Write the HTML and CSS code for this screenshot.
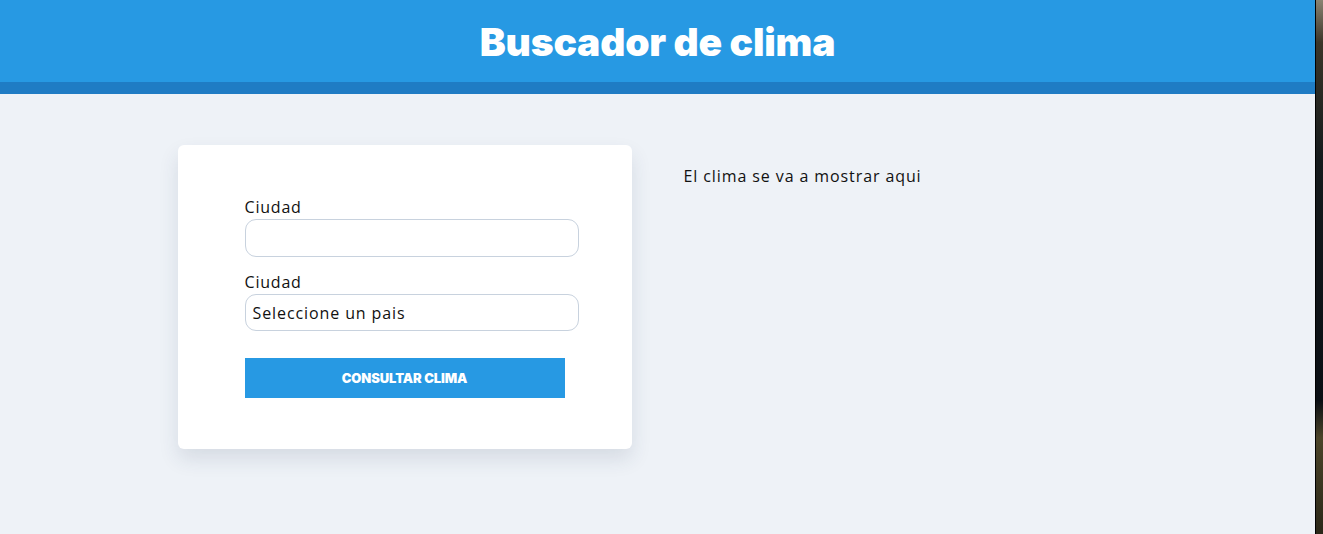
FILE: index.html
```html
<!DOCTYPE html>
<html lang="es">
<head>
<meta charset="utf-8">
<title>Buscador de clima</title>
<link rel="stylesheet" href="styles.css">
</head>
<body>
<div class="page">
  <header class="header">
    <h1 class="title">Buscador de clima</h1>
  </header>
  <main class="container">
    <section class="card">
      <form class="form">
        <div class="field">
          <label class="label">Ciudad</label>
          <div class="input"></div>
        </div>
        <div class="field">
          <label class="label">Ciudad</label>
          <div class="input select">Seleccione un pais</div>
        </div>
        <button type="button" class="button">Consultar clima</button>
      </form>
    </section>
    <section class="result">
      <p class="result-text">El clima se va a mostrar aqui</p>
    </section>
  </main>
</div>
<div class="edge"></div>
</body>
</html>
```

FILE: styles.css
```css
* { box-sizing: border-box; }
html, body { margin: 0; padding: 0; height: 100%; }
body {
  display: flex;
  background: #0c1117;
  font-family: "Open Sans", "DejaVu Sans", sans-serif;
  overflow: hidden;
}
.page {
  width: 1316px;
  height: 534px;
  background: #eef2f7;
  border-right: 1px solid #000;
}
.edge {
  flex: 1;
  background: linear-gradient(180deg, #8a8372 0%, #3a3528 8%, #141a1c 30%, #0a0f14 75%, #4b4429 82%, #2a2718 100%);
}
.header {
  height: 94px;
  background: #2799e3;
  border-bottom: 12px solid #1f7cc4;
  display: flex;
  align-items: center;
  justify-content: center;
}
.title {
  margin: 0;
  color: #fff;
  font-family: Inter, Roboto, sans-serif;
  font-weight: 900;
  font-size: 39px;
  letter-spacing: -0.2px;
}
.container {
  width: 960px;
  margin: 51px auto 0;
  display: grid;
  grid-template-columns: 454px 1fr;
  gap: 52px;
}
.card {
  background: #fff;
  border-radius: 6px;
  box-shadow: 0 10px 20px rgba(40, 60, 90, 0.12);
  padding: 50px 53px 51px 67px;
}
.form { display: flex; flex-direction: column; }
.field { display: flex; flex-direction: column; margin-bottom: 13px; }
.label {
  font-size: 16px;
  line-height: 24px;
  color: #111;
  letter-spacing: 0.8px;
}
.input {
  height: 38px;
  border: 1px solid #c8d2de;
  border-radius: 11px;
  background: #fff;
  font-size: 16px;
  color: #111;
  letter-spacing: 0.9px;
  padding: 0 7px;
  display: flex;
  align-items: center;
}
.select { height: 37px; }
.button {
  margin-top: 14px;
  width: 320px;
  height: 40px;
  border: 0;
  background: #2799e3;
  color: #fff;
  font-family: Inter, Roboto, sans-serif;
  font-weight: 900;
  font-size: 13px;
  text-transform: uppercase;
  letter-spacing: -0.1px;
}
.result { padding-top: 20px; }
.result-text {
  margin: 0;
  font-size: 16px;
  color: #111;
  letter-spacing: 0.9px;
}
```
